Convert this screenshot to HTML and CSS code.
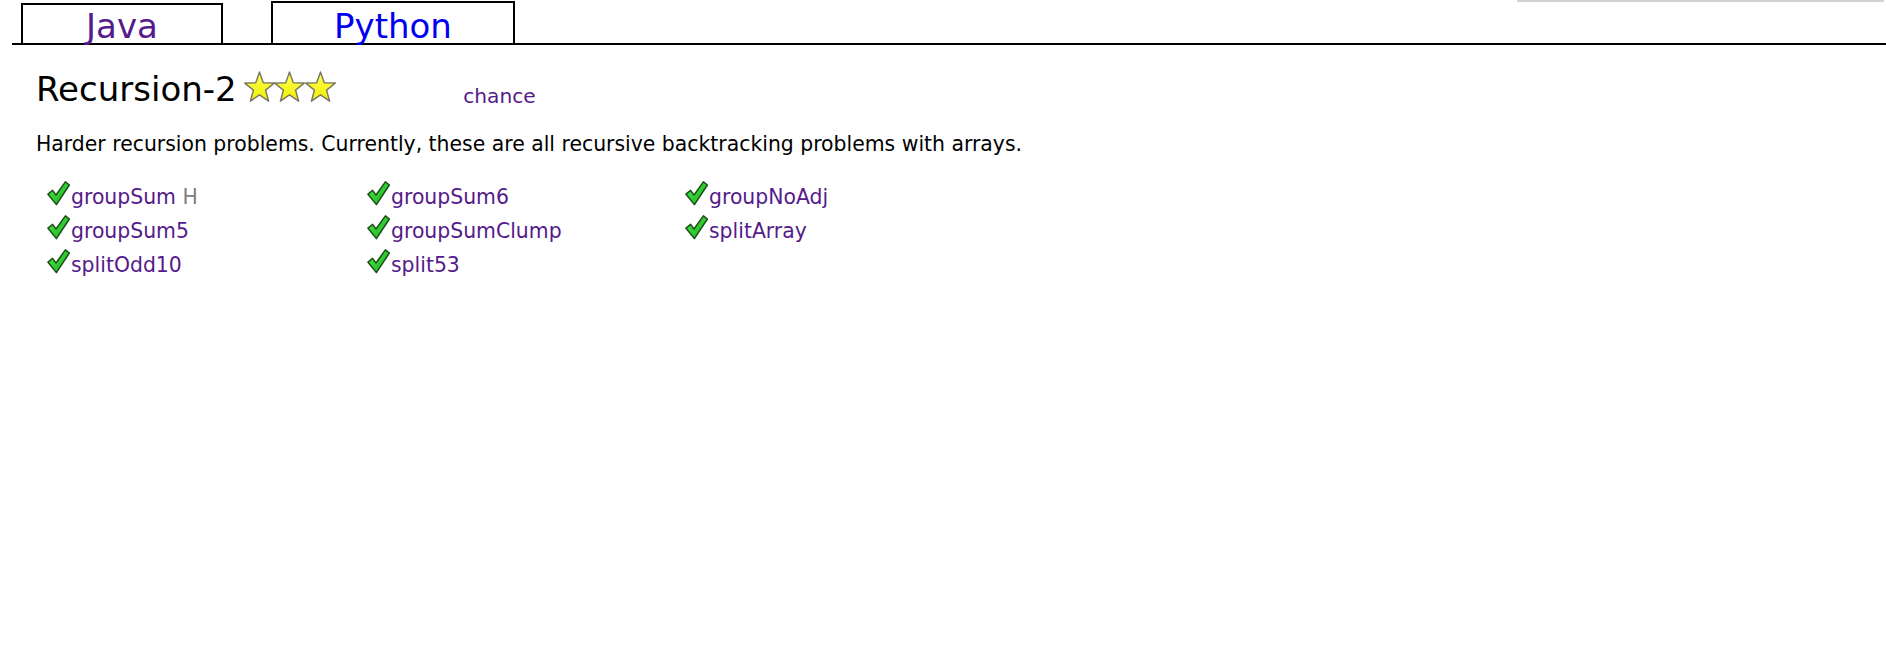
FILE: index.html
```html
<!DOCTYPE html>
<html>
<head>
<meta charset="utf-8">
<title>CodingBat Recursion-2</title>
<link rel="stylesheet" href="styles.css">
</head>
<body>
<svg class="defs" width="0" height="0" aria-hidden="true">
  <defs>
    <linearGradient id="starfill" x1="0" y1="0" x2="0" y2="1">
      <stop offset="0" stop-color="#ffff55"/>
      <stop offset="1" stop-color="#f0f000"/>
    </linearGradient>
    <linearGradient id="checkfill" x1="0" y1="0" x2="1" y2="1">
      <stop offset="0" stop-color="#55e855"/>
      <stop offset="1" stop-color="#10b010"/>
    </linearGradient>
    <symbol id="star" viewBox="1 1.2 28 26.8" preserveAspectRatio="none">
      <polygon points="15,2 18.41,11.31 28.32,11.67 20.52,17.79 23.23,27.33 15,21.8 6.77,27.33 9.48,17.79 1.68,11.67 11.59,11.31" fill="url(#starfill)" stroke="#7a7a66" stroke-width="1.3" stroke-linejoin="round"/>
    </symbol>
    <symbol id="check" viewBox="0 0 23 25">
      <path d="M1 13.2 L5.6 9.4 L9 14 L18.4 0.9 L22.4 4 L9.4 23.6 Z" fill="url(#checkfill)" stroke="#1a4f1a" stroke-width="1.5" stroke-linejoin="round"/>
    </symbol>
  </defs>
</svg>

<div class="corner-box"></div>

<div class="tabs">
  <a class="tab tab-java" href="#">Java</a>
  <a class="tab tab-python" href="#">Python</a>
</div>

<div class="content">
  <div class="head">
    <span class="title">Recursion-2</span><span class="stars"><svg class="star"><use href="#star"/></svg><svg class="star"><use href="#star"/></svg><svg class="star"><use href="#star"/></svg></span><a class="chance" href="#">chance</a>
  </div>

  <p class="desc">Harder recursion problems. Currently, these are all recursive backtracking problems with arrays.</p>

  <div class="problems">
    <div class="item"><svg class="check"><use href="#check"/></svg><a href="#">groupSum</a> <span class="hint">H</span></div>
    <div class="item"><svg class="check"><use href="#check"/></svg><a href="#">groupSum6</a></div>
    <div class="item"><svg class="check"><use href="#check"/></svg><a href="#">groupNoAdj</a></div>
    <div class="item"><svg class="check"><use href="#check"/></svg><a href="#">groupSum5</a></div>
    <div class="item"><svg class="check"><use href="#check"/></svg><a href="#">groupSumClump</a></div>
    <div class="item"><svg class="check"><use href="#check"/></svg><a href="#">splitArray</a></div>
    <div class="item"><svg class="check"><use href="#check"/></svg><a href="#">splitOdd10</a></div>
    <div class="item"><svg class="check"><use href="#check"/></svg><a href="#">split53</a></div>
  </div>
</div>
</body>
</html>
```

FILE: styles.css
```css
html, body {
  margin: 0;
  padding: 0;
  background: #ffffff;
}

body {
  font-family: "DejaVu Sans", Verdana, sans-serif;
  color: #000000;
  position: relative;
  min-height: 648px;
  overflow: hidden;
}

.defs {
  position: absolute;
  width: 0;
  height: 0;
  overflow: hidden;
}

.corner-box {
  position: absolute;
  top: -29px;
  right: 2px;
  width: 367px;
  height: 31px;
  box-sizing: border-box;
  border: 2px solid #d2d2d2;
}

.tabs {
  display: flex;
  align-items: flex-end;
  margin: 1px 0 0 12px;
  padding-left: 9px;
  gap: 48px;
  border-bottom: 2px solid #000000;
}

.tab {
  display: block;
  box-sizing: border-box;
  border: 2px solid #000000;
  border-bottom: 0;
  text-align: center;
  font-size: 34px;
  line-height: 42px;
  text-decoration: none;
}

.tab-java {
  width: 202px;
  height: 40px;
  color: #551a8b;
}

.tab-python {
  width: 244px;
  height: 42px;
  padding-top: 2px;
  color: #0000ee;
}

.content {
  padding-left: 36px;
}

.head {
  margin-top: 24px;
  font-size: 34px;
  line-height: 40px;
  white-space: nowrap;
}

.stars {
  margin-left: 7px;
}

.star {
  display: inline-block;
  width: 31px;
  height: 31px;
  margin-right: -0.5px;
  vertical-align: -1px;
}

.chance {
  font-size: 20.2px;
  line-height: 20px;
  margin-left: 128px;
  vertical-align: -2px;
  color: #551a8b;
  text-decoration: none;
}

.desc {
  margin: 23px 0 0 0;
  font-size: 20.4px;
  line-height: 24px;
}

.problems {
  margin: 24px 0 0 10px;
  display: grid;
  grid-template-columns: 320px 318px 320px;
  grid-auto-rows: 34px;
  font-size: 20.4px;
  line-height: 34px;
}

.item {
  white-space: nowrap;
}

.item a {
  color: #551a8b;
  text-decoration: none;
}

.hint {
  color: #808080;
}

.check {
  display: inline-block;
  width: 23px;
  height: 25px;
  margin-left: 1px;
  margin-right: 1px;
  vertical-align: -2px;
}
```
